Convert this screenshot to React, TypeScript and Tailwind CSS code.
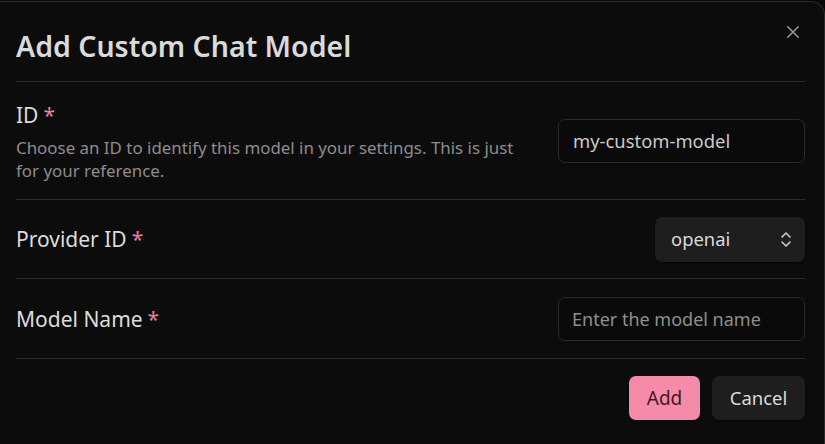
import React, { useState } from "react";

const FONT = "font-['Noto_Sans','Open_Sans',sans-serif]";

const Required = () => <span className="ml-[5px] text-[#e87ea1]">*</span>;

interface RowProps {
  label: string;
  desc?: string;
  children: React.ReactNode;
  className?: string;
}

const SettingRow: React.FC<RowProps> = ({ label, desc, children, className }) => (
  <div
    className={`flex items-center justify-between gap-6 border-b border-[#2a2a2a] ${className ?? ""}`}
  >
    <div className={`flex flex-col ${desc ? "pt-[3px]" : ""}`}>
      <div className="text-[21px] leading-[26px] text-[#dcdcdc]">
        {label}
        <Required />
      </div>
      {desc && (
        <div className="mt-[8px] w-[510px] text-[16.9px] leading-[23px] text-[#8c8c8c]">
          {desc}
        </div>
      )}
    </div>
    {children}
  </div>
);

export default function App() {
  const [id, setId] = useState("my-custom-model");
  const [provider, setProvider] = useState("openai");
  const [name, setName] = useState("");

  return (
    <div className={`h-[444px] w-[825px] overflow-hidden bg-[#070707] pt-px ${FONT}`}>
      <div className="relative h-[460px] rounded-tr-[14px] border-t border-r border-[#2c2c2c] bg-[#0c0c0d] pl-4 pr-[19px]">
        <button className="absolute top-[21px] right-[22px] text-[#9a9a9a]">
          <svg width="18" height="18" viewBox="0 0 24 24" fill="none" stroke="currentColor" strokeWidth="2" strokeLinecap="round">
            <path d="M5 5l14 14M19 5L5 19" />
          </svg>
        </button>

        <div className="border-b border-[#2a2a2a] pt-[26px] pb-[17px] text-[28.5px] leading-[36px] font-semibold text-[#dadada]">
          Add Custom Chat Model
        </div>

        <SettingRow
          className="h-[118px]"
          label="ID"
          desc="Choose an ID to identify this model in your settings. This is just for your reference."
        >
          <input
            value={id}
            onChange={(e) => setId(e.target.value)}
            className="h-[44px] w-[247px] rounded-[7px] border border-[#2a2a2a] bg-[#0a0a0a] px-[14px] text-[18.4px] text-[#c9c9c9] outline-none"
          />
        </SettingRow>

        <SettingRow className="h-[79px]" label="Provider ID">
          <div className="relative">
            <select
              value={provider}
              onChange={(e) => setProvider(e.target.value)}
              className="h-[45px] w-[150px] appearance-none rounded-[7px] bg-[#1e1e1e] pl-[16px] text-[18.4px] text-[#dadada] shadow-[0_1px_2px_rgba(0,0,0,0.6)] outline-none"
            >
              <option value="openai">openai</option>
              <option value="anthropic">anthropic</option>
            </select>
            <svg
              className="pointer-events-none absolute top-[14px] right-[13px] text-[#cfcfcf]"
              width="12" height="17" viewBox="0 0 12 17" fill="none" stroke="currentColor" strokeWidth="1.6" strokeLinecap="round" strokeLinejoin="round"
            >
              <path d="M2 6l4-4 4 4M2 11l4 4 4-4" />
            </svg>
          </div>
        </SettingRow>

        <SettingRow className="h-[80px]" label="Model Name">
          <input
            value={name}
            onChange={(e) => setName(e.target.value)}
            placeholder="Enter the model name"
            className="h-[44px] w-[247px] rounded-[7px] border border-[#2a2a2a] bg-[#0a0a0a] px-[13px] text-[18px] text-[#c9c9c9] outline-none placeholder:text-[#8e8e8e]"
          />
        </SettingRow>

        <div className="flex justify-end gap-3 pt-[17px]">
          <button className="h-[44px] w-[71px] rounded-[7px] bg-[#f38ba9] text-[19px] text-[#4a1426]">
            Add
          </button>
          <button className="h-[44px] w-[93px] rounded-[7px] bg-[#1e1e1e] text-[18.5px] text-[#dadada] shadow-[0_1px_2px_rgba(0,0,0,0.6)]">
            Cancel
          </button>
        </div>
      </div>
    </div>
  );
}
